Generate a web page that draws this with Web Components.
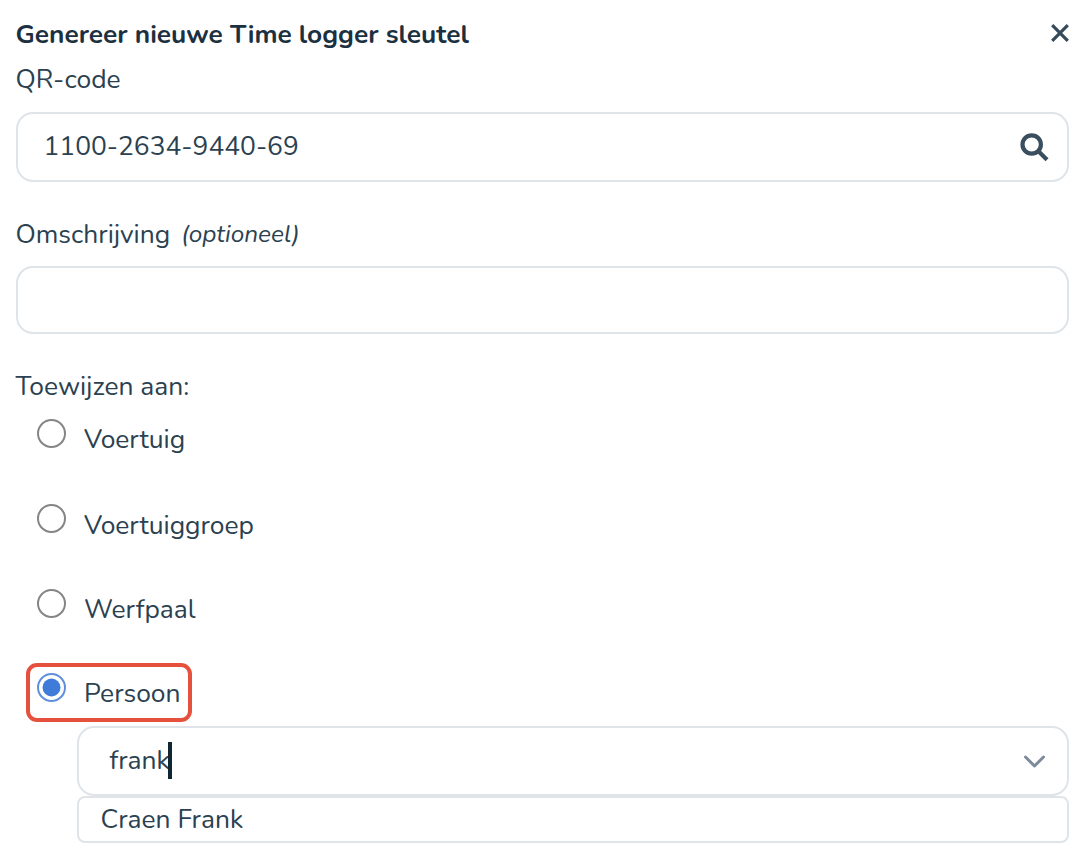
<!DOCTYPE html>
<html lang="nl">
<head>
<meta charset="utf-8">
<title>Time logger sleutel</title>
<style>
  body {
    margin: 0;
    background: #fff;
    color: #2b4150;
    font: 26.4px/32px Nunito, Lato, sans-serif;
  }
</style>
</head>
<body>
<key-dialog>
  <span slot="title">Genereer nieuwe Time logger sleutel</span>
  <form-field style="--label-height: 49px; --box-height: 70px">
    <span slot="label">QR-code</span>
    <span>1100-2634-9440-69</span>
    <search-icon slot="icon"></search-icon>
  </form-field>
  <form-field style="--label-height: 48px; --box-height: 68px">
    <span slot="label">Omschrijving</span>
    <i slot="hint">(optioneel)</i>
  </form-field>
  <radio-group>
    <span slot="label">Toewijzen aan:</span>
    <radio-option style="--row: 86px">Voertuig</radio-option>
    <radio-option style="--row: 84px; --shift: -1px">Voertuiggroep</radio-option>
    <radio-option style="--row: 84px">Werfpaal</radio-option>
    <radio-option style="--row: 49px" checked marked>Persoon</radio-option>
  </radio-group>
  <person-select value="frank">
    <span>Craen Frank</span>
  </person-select>
</key-dialog>

<script>
class BaseElement extends HTMLElement {
  connectedCallback () {
    if (this.shadowRoot) {
      return
    }
    this.attachShadow({ mode: 'open' })
    const template = document.createElement('template')
    template.innerHTML = this.getTemplate()
    this.shadowRoot.appendChild(template.content.cloneNode(true))
  }
}

class KeyDialog extends BaseElement {
  getTemplate () {
    return `
      <style>
        :host {
          display: flex;
          flex-direction: column;
          box-sizing: border-box;
          height: 853px;
          padding: 18px 6px 0 15.5px;
        }
        header {
          display: flex;
          justify-content: space-between;
          height: 45px;
          color: #1b3040;
          font-size: 26.3px;
          font-weight: 700;
        }
        svg { width: 18px; height: 18px; margin: 6px 0 0; }
        path { fill: none; stroke: #354a5a; stroke-width: 3.2; }
      </style>
      <header>
        <slot name="title"></slot>
        <svg viewBox="0 0 18 18"><path d="M1.2 1.2 16.8 16.8M16.8 1.2 1.2 16.8"/></svg>
      </header>
      <slot></slot>
    `
  }
}

class FormField extends BaseElement {
  getTemplate () {
    return `
      <style>
        :host { display: block; margin-bottom: 36px; }
        .label {
          display: flex;
          gap: 11px;
          height: var(--label-height);
        }
        ::slotted(i) { font-size: 24.4px; }
        .box {
          display: flex;
          align-items: center;
          justify-content: space-between;
          box-sizing: border-box;
          height: var(--box-height);
          padding: 0 18px 2px 26px;
          border: 2px solid #dfe4e9;
          border-radius: 17px;
        }
      </style>
      <div class="label"><slot name="label"></slot><slot name="hint"></slot></div>
      <div class="box"><slot></slot><slot name="icon"></slot></div>
    `
  }
}

class SearchIcon extends BaseElement {
  getTemplate () {
    return `
      <style>
        :host { display: flex; }
        svg { width: 29px; height: 29px; margin-top: 2px; }
        circle, path { fill: none; stroke: #3a4e5d; stroke-width: 4.2; }
      </style>
      <svg viewBox="0 0 29 29">
        <circle cx="11.7" cy="11.5" r="9.2"/>
        <path d="M18.2 18 27 26.8"/>
      </svg>
    `
  }
}

class RadioGroup extends BaseElement {
  getTemplate () {
    return `
      <style>
        :host { display: block; }
        .label { height: 53px; }
      </style>
      <div class="label"><slot name="label"></slot></div>
      <slot></slot>
    `
  }
}

class RadioOption extends BaseElement {
  getTemplate () {
    const checked = this.hasAttribute('checked')

    return `
      <style>
        :host {
          position: relative;
          display: flex;
          gap: 17px;
          height: var(--row);
          padding-left: 20.5px;
        }
        svg { flex: none; width: 31px; height: 31px; margin-top: calc(-5px + var(--shift, 0px)); }
        .ring { fill: #fff; stroke: #858585; stroke-width: 2; }
        .ring.on { stroke: #5f8fde; }
        .dot { fill: #3f7bd9; }
        /* red frame laid over the chosen option */
        :host([marked])::after {
          content: '';
          position: absolute;
          left: 10.5px;
          top: -14px;
          width: 158px;
          height: 51px;
          border: 4px solid #e5513d;
          border-radius: 11px;
        }
      </style>
      <svg viewBox="0 0 31 31">
        <circle class="ring ${checked ? 'on' : ''}" cx="15.5" cy="15.5" r="13.5"/>
        ${checked ? '<circle class="dot" cx="15.5" cy="15.5" r="9"/>' : ''}
      </svg>
      <slot></slot>
    `
  }
}

class PersonSelect extends BaseElement {
  getTemplate () {
    return `
      <style>
        :host { display: block; margin-left: 61px; }
        .box {
          display: flex;
          align-items: center;
          box-sizing: border-box;
          height: 70px;
          padding: 0 21px 2px 31px;
          border: 2px solid #dfe4e9;
          border-radius: 17px;
        }
        .caret { width: 4px; height: 37px; margin-left: -2px; background: #0f2733; }
        svg { width: 23px; height: 15px; margin: 3px 0 0 auto; }
        path { fill: none; stroke: #7d8b9a; stroke-width: 3; stroke-linecap: round; stroke-linejoin: round; }
        .list {
          box-sizing: border-box;
          height: 47px;
          padding: 5px 22px 0;
          border: 2px solid #dfe4e9;
          border-radius: 8px;
        }
      </style>
      <div class="box">
        <span>${this.getAttribute('value')}</span>
        <span class="caret"></span>
        <svg viewBox="0 0 23 15"><path d="M2.5 3 11.5 12 20.5 3"/></svg>
      </div>
      <div class="list"><slot></slot></div>
    `
  }
}

window.customElements.define('key-dialog', KeyDialog)
window.customElements.define('form-field', FormField)
window.customElements.define('search-icon', SearchIcon)
window.customElements.define('radio-group', RadioGroup)
window.customElements.define('radio-option', RadioOption)
window.customElements.define('person-select', PersonSelect)
</script>
</body>
</html>
